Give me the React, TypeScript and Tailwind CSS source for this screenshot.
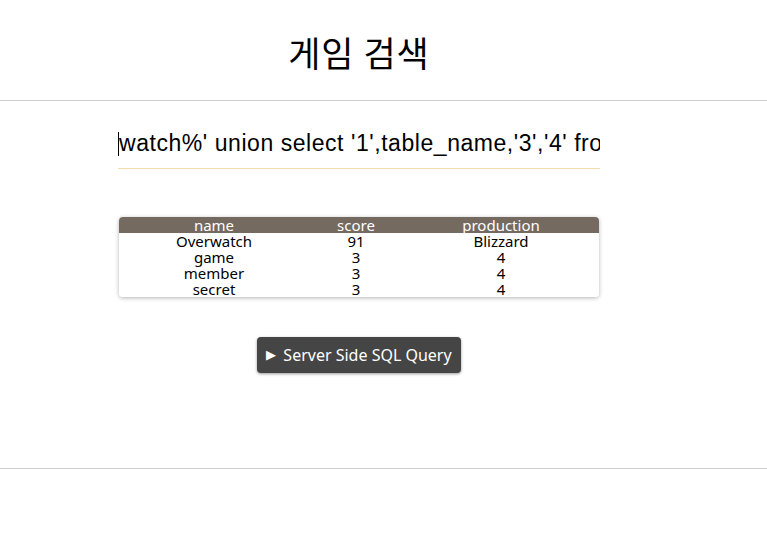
import React from 'react';

const rows = [
  { name: 'Overwatch', score: '91', production: 'Blizzard' },
  { name: 'game', score: '3', production: '4' },
  { name: 'member', score: '3', production: '4' },
  { name: 'secret', score: '3', production: '4' },
];

export default function App() {
  return (
    <div className="min-h-[536px] bg-white text-black font-['Noto_Sans',sans-serif]">
      {/* Header */}
      <div className="w-[718px] h-[100px] flex items-center justify-center">
        <h1 className="text-[35px] font-normal tracking-[1px] font-['Noto_Sans_CJK_KR',sans-serif] pt-1">게임 검색</h1>
      </div>
      <div className="h-px bg-[#cfcfcf]" />

      <div className="ml-[118px] w-[482px]">
        {/* Search input */}
        <div className="mt-[26px] h-[42px] border-b border-[#f3dcae] overflow-hidden whitespace-nowrap relative">
          <span className="absolute left-0 top-[5px] w-px h-[24px] bg-black" />
          <span className="block pl-[1px] text-[23px] tracking-[0.55px] leading-[32px] font-['Liberation_Sans',sans-serif]">
            watch%' union select '1',table_name,'3','4' from information_schema.tables #
          </span>
        </div>

        {/* Results table */}
        <div className="mt-[48px] ml-px w-[480px] rounded-[4px] overflow-hidden shadow-[0_1px_4px_rgba(0,0,0,0.3)] text-[15px] leading-4">
          <div className="grid grid-cols-[190px_94px_196px] bg-[#746a60] text-white text-center">
            <div>name</div>
            <div>score</div>
            <div>production</div>
          </div>
          {rows.map((r) => (
            <div key={r.name} className="grid grid-cols-[190px_94px_196px] text-center bg-white">
              <div>{r.name}</div>
              <div>{r.score}</div>
              <div>{r.production}</div>
            </div>
          ))}
        </div>

        {/* Button */}
        <div className="mt-[40px] flex justify-center">
          <button className="w-[204px] h-[36px] rounded-[4px] bg-[#454545] text-white text-[16px] shadow-[0_1px_3px_rgba(0,0,0,0.4)] flex items-center justify-center gap-[7px]">
            <span className="text-[13px]">▶</span>
            <span>Server Side SQL Query</span>
          </button>
        </div>
      </div>

      <div className="mt-[95px] h-px bg-[#cfcfcf]" />
    </div>
  );
}
